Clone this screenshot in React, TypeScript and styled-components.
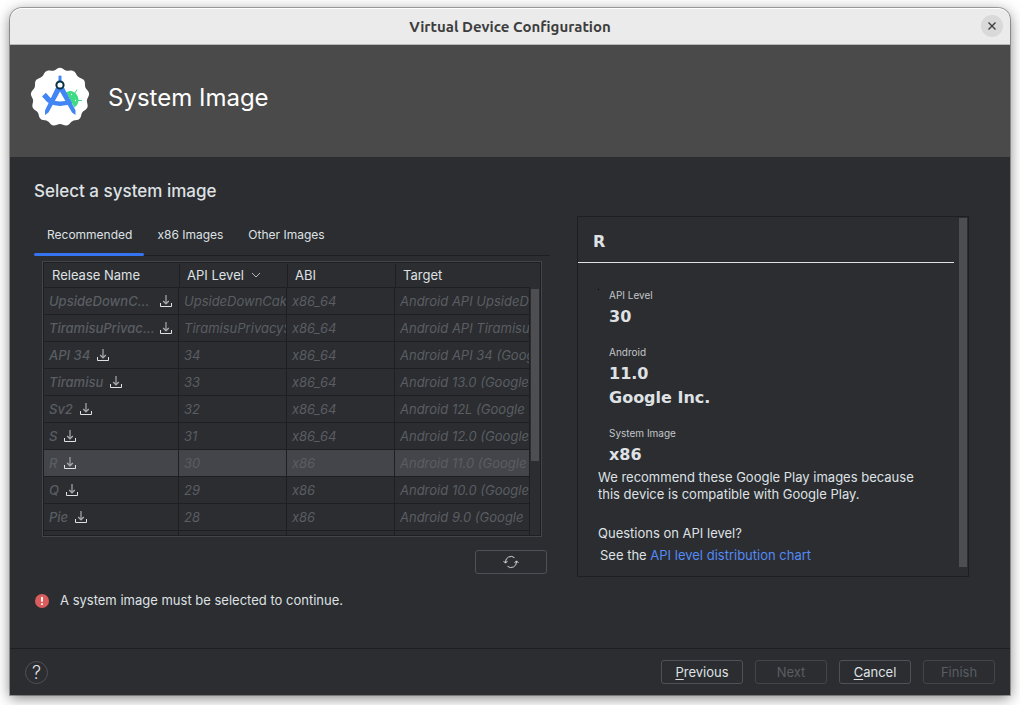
import React from "react";
import styled, { createGlobalStyle, css } from "styled-components";

const color = {
  bg: "#2b2d30",
  line: "#1e1f22",
  border: "#43454a",
  button: "#4e5157",
  text: "#dfe1e5",
  muted: "#5a5d63",
  thumb: "#4d4e51",
  accent: "#3574f0",
  link: "#548af7",
};

const Global = createGlobalStyle`
  *, *::before, *::after { box-sizing: border-box; }
  body {
    margin: 0;
    background: #fff;
    color: ${color.text};
    font: 13px/17px Inter, "Liberation Sans", sans-serif;
  }
  button { font: inherit; color: inherit; }
`;

const Page = styled.div`
  display: flex;
  min-height: 100vh;
  padding: 8px 10px 10px;
`;

const Dialog = styled.div`
  flex: 1;
  min-width: 0;
  display: flex;
  flex-direction: column;
  background: ${color.bg};
  border-radius: 12px 12px 0 0;
  box-shadow: 0 0 0 1px rgba(0, 0, 0, 0.3), 0 3px 14px rgba(0, 0, 0, 0.5);
`;

const TitleBar = styled.header`
  display: grid;
  grid-template-columns: 1fr auto 1fr;
  align-items: center;
  height: 37px;
  padding: 0 7px;
  background: #ebebeb;
  border-bottom: 1px solid #b8b8b8;
  border-radius: 12px 12px 0 0;
  box-shadow: inset 0 1px 0 #fff;
`;

const WindowTitle = styled.h1`
  grid-column: 2;
  margin: 0;
  padding-top: 2px;
  color: #3d3d3d;
  font: bold 15px/20px Ubuntu, "Noto Sans", sans-serif;
`;

const CloseButton = styled.button`
  justify-self: end;
  display: grid;
  place-items: center;
  width: 22px;
  height: 22px;
  padding: 0;
  border: 0;
  border-radius: 50%;
  background: #d9d9d9;
`;

const Banner = styled.div`
  display: flex;
  align-items: center;
  gap: 18px;
  height: 112px;
  padding: 0 20px 8px;
  background: #4a4a4a;
`;

const BannerTitle = styled.h2`
  margin: 0;
  padding-top: 2px;
  color: #fff;
  font-size: 24px;
  font-weight: 400;
  line-height: 32px;
`;

const Content = styled.main`
  flex: 1;
  min-height: 0;
  display: flex;
  flex-direction: column;
  padding: 24px 41px 39px 24px;
`;

const SectionTitle = styled.h3`
  margin: 0;
  font-size: 17px;
  font-weight: 500;
  line-height: 20px;
`;

const Columns = styled.div`
  flex: 1;
  display: grid;
  grid-template-columns: minmax(0, 516fr) minmax(0, 392fr);
  gap: 27px;
  margin-top: 15px;
`;

const Chooser = styled.section`
  display: flex;
  flex-direction: column;
`;

const Tabs = styled.div`
  display: flex;
  height: 40px;
  box-shadow: inset 0 -1px 0 ${color.line};
`;

const Tab = styled.button<{ $active?: boolean }>`
  position: relative;
  padding: 0 12px 4px 13px;
  border: 0;
  background: none;
  font-size: 12px;
  ${(p) =>
    p.$active &&
    css`
      &::after {
        content: "";
        position: absolute;
        inset: auto 0 0;
        height: 3px;
        border-radius: 2px;
        background: ${color.accent};
      }
    `}
`;

const TableFrame = styled.div`
  flex: 1 1 0;
  min-height: 0;
  display: flex;
  margin: 5px 8px 0;
  border: 1px solid ${color.border};
  outline: 1px solid ${color.line};
  outline-offset: -2px;
  padding: 1px;
  overflow: hidden;
`;

const TableView = styled.div`
  flex: 1;
  min-width: 0;
  height: 0;
  min-height: 100%;
  overflow: hidden;
`;

const Table = styled.table`
  width: 100%;
  table-layout: fixed;
  border-spacing: 0;
`;

const Col = styled.col<{ $w?: number }>`
  width: ${(p) => (p.$w ? `${p.$w}px` : "auto")};
`;

const Th = styled.th`
  height: 25px;
  padding: 1px 0 0;
  border-bottom: 1px solid ${color.line};
  text-align: left;
  font-weight: 400;
`;

const ThLabel = styled.span<{ $first?: boolean }>`
  display: flex;
  align-items: center;
  gap: 7px;
  height: 23px;
  padding-left: ${(p) => (p.$first ? 8 : 7)}px;
  border-left: ${(p) => (p.$first ? "0" : `1px solid ${color.line}`)};
`;

const Row = styled.tr<{ $selected?: boolean }>`
  background: ${(p) => (p.$selected ? "#43454a" : "transparent")};
`;

const Td = styled.td`
  height: 27px;
  padding: 0 0 0 5px;
  border: solid ${color.line};
  border-width: 0 1px 1px 0;
  color: ${color.muted};
  font-style: italic;
  white-space: nowrap;
  overflow: hidden;
`;

const NameCell = styled.div<{ $full: boolean }>`
  display: flex;
  align-items: center;
  justify-content: ${(p) => (p.$full ? "space-between" : "flex-start")};
  gap: ${(p) => (p.$full ? 3 : 5)}px;
  padding-right: 4px;
  font-weight: 500;
`;

const Track = styled.div`
  flex: none;
  width: 10px;
  padding: 26px 1px 74px;
  display: flex;
`;

const Thumb = styled.div`
  flex: 1;
  background: ${color.thumb};
`;

const Button = styled.button<{ $wide?: boolean }>`
  display: inline-flex;
  align-items: center;
  justify-content: center;
  width: ${(p) => (p.$wide ? 82 : 72)}px;
  height: 24px;
  padding: 0;
  border: 1px solid ${color.button};
  border-radius: 3px;
  background: none;
  &:disabled {
    border-color: ${color.border};
    color: ${color.muted};
  }
  u { text-underline-offset: 2px; }
`;

const RefreshRow = styled.div`
  display: flex;
  justify-content: flex-end;
  padding: 13px 3px 3px 0;
`;

const Details = styled.aside`
  display: flex;
  border: 1px solid ${color.line};
`;

const DetailsBody = styled.div`
  flex: 1;
  min-width: 0;
`;

const DetailsTrack = styled.div`
  flex: none;
  display: flex;
  width: 14px;
  padding: 1px 1px 9px 5px;
`;

const DetailsTitle = styled.h4`
  margin: 0;
  padding: 13px 15px 8px;
  border-bottom: 1px solid ${color.text};
  font: bold 16px/24px "DejaVu Sans", sans-serif;
`;

const Facts = styled.dl`
  position: relative;
  margin: 25px 0 0;
  padding-left: 31px;
  &::before {
    content: "";
    position: absolute;
    left: 20px;
    top: 1px;
    width: 1px;
    height: 1px;
    background: #000;
  }
`;

const Term = styled.dt`
  margin-bottom: 3px;
  color: #c3c5c9;
  font-size: 10px;
  line-height: 14px;
  dd + & { margin-top: 16px; }
`;

const Value = styled.dd`
  margin: 0;
  font: bold 16px/24px "DejaVu Sans", sans-serif;
`;

const Note = styled.p<{ $top: number; $indent?: boolean }>`
  margin: ${(p) => p.$top}px 20px 0 ${(p) => (p.$indent ? 22 : 20)}px;
`;

const Link = styled.a`
  color: ${color.link};
  text-decoration: none;
`;

const ErrorLine = styled.div`
  display: flex;
  align-items: center;
  gap: 11px;
  height: 17px;
  margin-top: 15px;
  padding-left: 1px;
`;

const Footer = styled.footer`
  display: flex;
  align-items: center;
  gap: 12px;
  height: 47px;
  padding: 0 15px;
  border-top: 1px solid ${color.line};
`;

const HelpButton = styled.button`
  width: 23px;
  height: 23px;
  margin-right: auto;
  padding: 0;
  border: 1px solid ${color.button};
  border-radius: 50%;
  background: none;
  font-size: 18px;
  font-weight: 300;
  line-height: 21px;
`;

const badge = Array.from({ length: 121 }, (_, i) => {
  const a = (i / 120) * Math.PI * 2 - Math.PI / 2;
  const r = 28.2 + 1.1 * Math.cos(13 * (a + Math.PI / 2));
  return `${(30 + r * Math.cos(a)).toFixed(2)},${(30 + r * Math.sin(a)).toFixed(2)}`;
}).join(" ");

const StudioLogo = () => (
  <svg width="60" height="60" viewBox="0 0 60 60" aria-hidden="true">
    <polygon points={badge} fill="#fff" />
    <path d="M36 25.500c5-4 12 0 12.500 7.500 0 3-1.500 6-4 7.500z" fill="#3ddc84" />
    <path d="M45 26l2-3.500M48 33.500h4" stroke="#3ddc84" strokeWidth="1" />
    <circle cx="41.500" cy="27.500" r=".7" fill="#fff" />
    <circle cx="45.500" cy="33.500" r=".7" fill="#fff" />
    <path d="M28.500 9.500q0-1 1.500-1t1.500 1V16h-3z" fill="#4285f4" />
    <path d="M26 20.500h8L45.500 43.500V48l-3.500-2.500L30 24.500 18.500 45.500 15 48v-4.500z" fill="#4285f4" />
    <path d="M15 28.500Q19 36.500 30 36.800 36 36.800 41 34" fill="none" stroke="#4285f4" strokeWidth="4.500" />
    <path d="M12 29.500l3.800-3.800 5.200 5.800-3 4z" fill="#4285f4" />
    <circle cx="30" cy="18" r="3.600" fill="#fff" stroke="#073042" strokeWidth="2" />
  </svg>
);

const DownloadIcon = () => (
  <svg width="16" height="16" viewBox="0 0 16 16" fill="none" aria-hidden="true">
    <path d="M8 2v8.500" stroke="#8a8c90" strokeWidth="1.600" />
    <path d="M5.200 8L8 10.800 10.800 8" stroke="#a9abb0" strokeWidth="1.300" />
    <path d="M2.500 10v3.500h11V10" stroke="#dfe1e5" />
  </svg>
);

const RefreshIcon = () => (
  <svg width="16" height="16" viewBox="0 0 16 16" fill="none" stroke="#ced0d6" aria-hidden="true">
    <path d="M2.500 9V8A5.500 5.500 0 0 1 11.500 3.700M13.500 7v1A5.500 5.500 0 0 1 4.500 12.300" />
    <path d="M.5 7l2 2.200 2-2.200M11.500 9l2-2.200 2 2.200" />
  </svg>
);

const SortIcon = () => (
  <svg width="10" height="8" viewBox="0 0 10 8" fill="none" stroke="#b4b8bf" aria-hidden="true">
    <path d="M1 1l4 4 4-4" />
  </svg>
);

const ErrorIcon = () => (
  <svg width="14" height="14" viewBox="0 0 14 14" aria-hidden="true">
    <circle cx="7" cy="7" r="7" fill="#db5c5c" />
    <path d="M7 3v4.800M7 9.200V11" stroke="#fff" strokeWidth="1.800" />
  </svg>
);

const CloseIcon = () => (
  <svg width="8" height="8" viewBox="0 0 8 8" stroke="#3d3d3d" strokeWidth="1.400" aria-hidden="true">
    <path d="M.5.5l7 7M7.500.5l-7 7" />
  </svg>
);

const images = [
  ["UpsideDownC...", "UpsideDownCake", "x86_64", "Android API UpsideDo"],
  ["TiramisuPrivac...", "TiramisuPrivacyS", "x86_64", "Android API Tiramisu"],
  ["API 34", "34", "x86_64", "Android API 34 (Goog"],
  ["Tiramisu", "33", "x86_64", "Android 13.0 (Google"],
  ["Sv2", "32", "x86_64", "Android 12L (Google"],
  ["S", "31", "x86_64", "Android 12.0 (Google"],
  ["R", "30", "x86", "Android 11.0 (Google"],
  ["Q", "29", "x86", "Android 10.0 (Google"],
  ["Pie", "28", "x86", "Android 9.0 (Google"],
];

export default function App() {
  return (
    <Page>
      <Global />
      <Dialog role="dialog" aria-labelledby="window-title">
        <TitleBar>
          <WindowTitle id="window-title">Virtual Device Configuration</WindowTitle>
          <CloseButton aria-label="Close"><CloseIcon /></CloseButton>
        </TitleBar>
        <Banner>
          <StudioLogo />
          <BannerTitle>System Image</BannerTitle>
        </Banner>
        <Content>
          <SectionTitle>Select a system image</SectionTitle>
          <Columns>
            <Chooser>
              <Tabs role="tablist">
                <Tab role="tab" aria-selected $active>Recommended</Tab>
                <Tab role="tab">x86 Images</Tab>
                <Tab role="tab">Other Images</Tab>
              </Tabs>
              <TableFrame>
                <TableView>
                  <Table>
                    <colgroup>
                      <Col $w={135} /><Col $w={108} /><Col $w={108} /><Col />
                    </colgroup>
                    <thead>
                      <tr>
                        <Th><ThLabel $first>Release Name</ThLabel></Th>
                        <Th><ThLabel>API Level <SortIcon /></ThLabel></Th>
                        <Th><ThLabel>ABI</ThLabel></Th>
                        <Th><ThLabel>Target</ThLabel></Th>
                      </tr>
                    </thead>
                    <tbody>
                      {images.map(([name, api, abi, target]) => (
                        <Row key={name} $selected={name === "R"}>
                          <Td><NameCell $full={name.endsWith("...")}>{name}<DownloadIcon /></NameCell></Td>
                          <Td>{api}</Td>
                          <Td>{abi}</Td>
                          <Td>{target}</Td>
                        </Row>
                      ))}
                      <Row><Td /><Td /><Td /><Td /></Row>
                    </tbody>
                  </Table>
                </TableView>
                <Track><Thumb /></Track>
              </TableFrame>
              <RefreshRow>
                <Button aria-label="Refresh"><RefreshIcon /></Button>
              </RefreshRow>
            </Chooser>
            <Details>
              <DetailsBody>
                <DetailsTitle>R</DetailsTitle>
                <Facts>
                  <Term>API Level</Term>
                  <Value>30</Value>
                  <Term>Android</Term>
                  <Value>11.0</Value>
                  <Value>Google Inc.</Value>
                  <Term>System Image</Term>
                  <Value>x86</Value>
                </Facts>
                <Note $top={2}>We recommend these Google Play images because this device is compatible with Google Play.</Note>
                <Note $top={22}>Questions on API level?</Note>
                <Note $top={5} $indent>See the <Link href="#distribution">API level distribution chart</Link></Note>
              </DetailsBody>
              <DetailsTrack><Thumb /></DetailsTrack>
            </Details>
          </Columns>
          <ErrorLine role="alert"><ErrorIcon />A system image must be selected to continue.</ErrorLine>
        </Content>
        <Footer>
          <HelpButton aria-label="Help">?</HelpButton>
          <Button $wide><span><u>P</u>revious</span></Button>
          <Button disabled>Next</Button>
          <Button><span><u>C</u>ancel</span></Button>
          <Button disabled>Finish</Button>
        </Footer>
      </Dialog>
    </Page>
  );
}
